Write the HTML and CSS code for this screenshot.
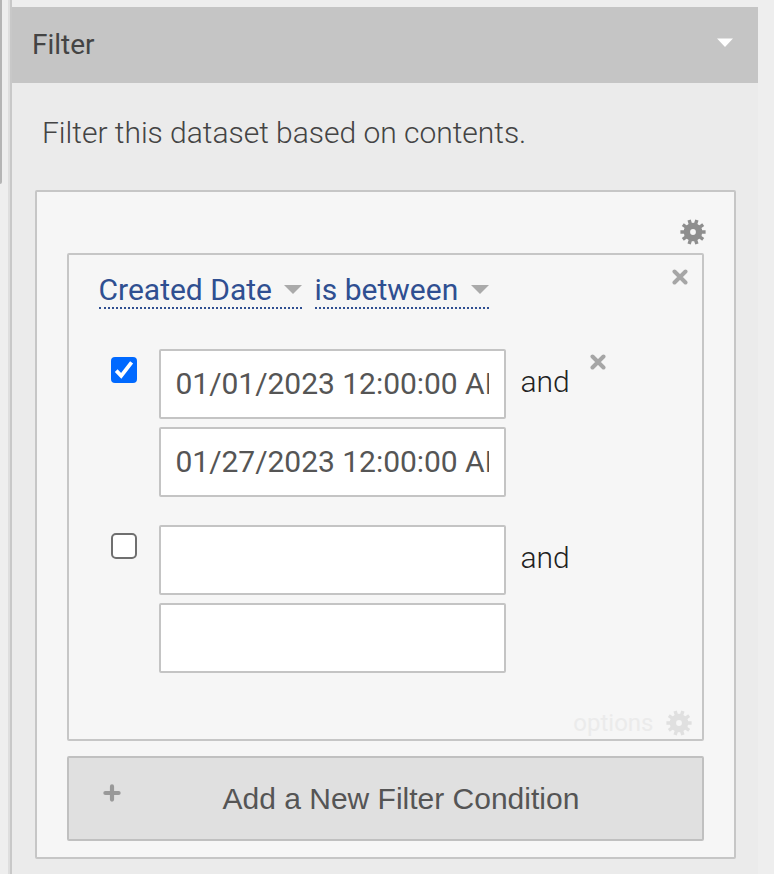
FILE: index.html
```html
<!DOCTYPE html>
<html lang="en">
<head>
<meta charset="utf-8">
<title>Filter</title>
<link rel="stylesheet" href="styles.css">
</head>
<body>
<svg class="defs" aria-hidden="true">
  <symbol id="gear" viewBox="-13 -13 26 26">
    <circle r="6.1" fill="none" stroke="currentColor" stroke-width="6.4"/>
    <g stroke="currentColor" stroke-width="3.4">
      <path d="M-12.6 0H-8M12.6 0H8"/>
      <path d="M-12.6 0H-8M12.6 0H8" transform="rotate(36)"/>
      <path d="M-12.6 0H-8M12.6 0H8" transform="rotate(72)"/>
      <path d="M-12.6 0H-8M12.6 0H8" transform="rotate(108)"/>
      <path d="M-12.6 0H-8M12.6 0H8" transform="rotate(144)"/>
    </g>
  </symbol>
  <symbol id="cross" viewBox="0 0 16 16">
    <path d="M2.5 2.5l11 11M13.5 2.5l-11 11" fill="none" stroke="currentColor" stroke-width="4" stroke-linecap="round"/>
  </symbol>
</svg>
<div class="page">
  <div class="gutter"><div class="scroll-thumb"></div></div>
  <section class="pane">
    <header class="pane-header">
      <h2>Filter</h2>
      <svg class="collapse" viewBox="0 0 18 10"><path d="M1 .6h16L9 9z" fill="#fff"/></svg>
    </header>
    <p class="description">Filter this dataset based on contents.</p>
    <div class="filters">
      <div class="toolbar"><svg class="gear"><use href="#gear"/></svg></div>
      <div class="condition">
        <div class="condition-head">
          <a class="picker column">Created Date<i class="arrow"></i></a>
          <a class="picker operator">is between<i class="arrow"></i></a>
          <svg class="cross remove-condition"><use href="#cross"/></svg>
        </div>
        <div class="value-row">
          <span class="check checked"><svg viewBox="0 0 26 26"><path d="M5.2 13.6l5 5.2L20.6 5.4" fill="none" stroke="#fff" stroke-width="3.8"/></svg></span>
          <div class="inputs">
            <div class="field"><span>01/01/2023 12:00:00 AM</span></div>
            <div class="field"><span>01/27/2023 12:00:00 AM</span></div>
          </div>
          <span class="and">and</span>
          <svg class="cross remove-value"><use href="#cross"/></svg>
        </div>
        <div class="value-row">
          <span class="check"></span>
          <div class="inputs">
            <div class="field"></div>
            <div class="field"></div>
          </div>
          <span class="and">and</span>
        </div>
        <div class="options"><span>options</span><svg class="gear"><use href="#gear"/></svg></div>
      </div>
      <div class="add" role="button">
        <svg class="plus" viewBox="0 0 18 18"><path d="M9 2.4v13.2M2.4 9h13.2" stroke="#999" stroke-width="4.2" stroke-linecap="round"/></svg>
        <span>Add a New Filter Condition</span>
      </div>
    </div>
  </section>
</div>
</body>
</html>
```
FILE: styles.css
```css
* { box-sizing: border-box; }
body {
  margin: 0;
  background: #eee;
  color: #444;
  font-family: Roboto, "Liberation Sans", sans-serif;
  overflow: hidden;
}
.defs { display: none; }
.page { display: flex; height: 874px; }
.gutter { width: 8px; }
.scroll-thumb {
  width: 2px;
  height: 184px;
  background: #b5b5b5;
  border-bottom-right-radius: 2px;
}
.pane {
  width: 750px;
  border-left: 2px solid #dedede;
  background: linear-gradient(#eee, #eee) 2px 0 / 100% 7px no-repeat, #ebebeb;
  box-shadow: inset 2px 0 #c8c8c8;
  padding: 7px 0 0 2px;
}
.pane-header {
  display: flex;
  align-items: center;
  justify-content: space-between;
  height: 76px;
  padding: 0 24px 0 20px;
  background: #c5c5c5;
}
.pane-header h2 {
  margin: 0;
  font-size: 28px;
  line-height: 36px;
  font-weight: 400;
}
.collapse { width: 18px; height: 10px; margin-top: -4px; filter: blur(0.4px); }
.description {
  margin: 30px 0 0 30px;
  height: 77px;
  font-size: 30px;
  line-height: 40px;
  font-weight: 300;
  letter-spacing: -0.02px;
  white-space: nowrap;
}
.filters {
  width: 701px;
  height: 669px;
  margin-left: 23px;
  padding: 0 30px;
  border: 2px solid #c6c6c6;
  border-radius: 2px;
  background: #f6f6f6;
}
.toolbar {
  display: flex;
  justify-content: flex-end;
  height: 61px;
  padding: 27px 0 0;
  margin-right: -1.5px;
}
.gear { width: 26px; height: 26px; color: #8e8e8e; filter: blur(0.6px); }
.cross { width: 16px; height: 16px; color: #a6a6a6; filter: blur(0.5px); }
.condition {
  height: 488px;
  border: 2px solid #c6c6c6;
  border-radius: 2px;
}
.condition-head {
  display: flex;
  align-items: flex-start;
  height: 94px;
  padding: 14px 14px 0 30px;
}
.picker {
  display: flex;
  align-items: center;
  justify-content: space-between;
  height: 40px;
  padding-top: 2px;
  border-bottom: 2px dotted #2f4f91;
  color: #2f4f91;
  font-size: 30px;
  text-indent: -0.5px;
  white-space: nowrap;
}
.column { width: 203px; margin-right: 13px; }
.operator { width: 174px; }
.arrow {
  margin-top: 1px;
  border: 9px solid transparent;
  border-top-color: #aaa;
  border-bottom: 0;
}
.remove-condition { margin-left: auto; }
.value-row {
  display: flex;
  align-items: flex-start;
  height: 176px;
  padding-left: 42px;
}
.check {
  width: 26px;
  height: 26px;
  margin: 8px 22px 0 0;
  border: 2px solid #6f6f6f;
  border-radius: 5px;
  background: #fff;
}
.checked { border: 0; border-radius: 4px; background: #0069ff; }
.check svg { display: block; }
.inputs { display: flex; flex-direction: column; gap: 8px; width: 347px; }
.field {
  height: 70px;
  padding: 0 15px 0 14.5px;
  border: 2px solid #c4c4c4;
  border-radius: 2px;
  background: #fff;
  color: #555;
  font-size: 30px;
  line-height: 66px;
  letter-spacing: -0.03px;
}
.field span { display: block; overflow: hidden; white-space: nowrap; }
.and {
  width: 48px;
  margin: 13px 0 0 14.5px;
  color: #222;
  font-size: 30px;
  line-height: 40px;
  font-weight: 300;
}
.remove-value { margin: 5px 0 0 21.5px; }
.options {
  display: flex;
  align-items: center;
  justify-content: flex-end;
  gap: 12px;
  height: 36px;
  margin-top: 4px;
  padding: 0 10.5px 0 0;
  color: #ebebeb;
  font-size: 24px;
}
.options .gear { color: #e0e0e0; }
.add {
  display: flex;
  align-items: center;
  height: 85px;
  margin-top: 15px;
  padding-left: 34px;
  border: 2px solid #c0c0c0;
  border-radius: 2px;
  background: #e0e0e0;
  color: #555;
  font-family: "Liberation Sans", Arial, sans-serif;
  font-size: 30px;
}
.plus { width: 18px; height: 18px; margin: -11px 101.5px 0 0; filter: blur(0.6px); }
```
